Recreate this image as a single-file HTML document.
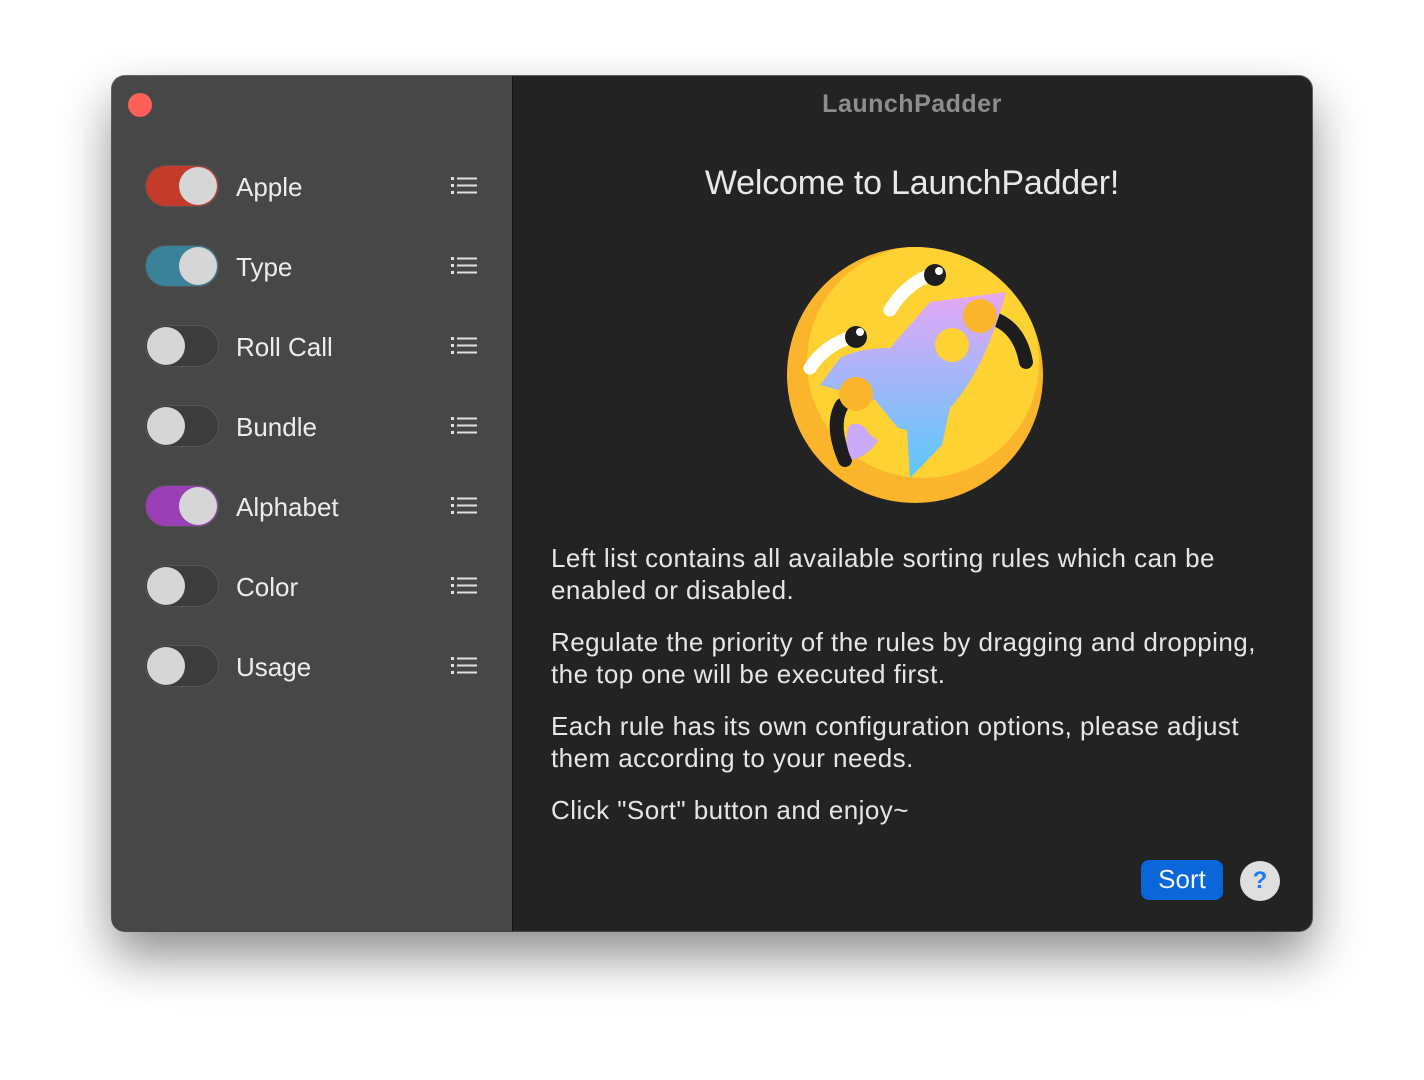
<!DOCTYPE html>
<html><head><meta charset="utf-8"><style>
html,body{margin:0;padding:0;width:1424px;height:1080px;background:#fff;overflow:hidden;font-family:"Liberation Sans",sans-serif;}
.win{position:absolute;left:112px;top:76px;width:1200px;height:855px;border-radius:13px;background:#232323;overflow:hidden;box-shadow:0 25px 50px rgba(0,0,0,.45),0 0 0 1px #6a6a6a;}
.side{position:absolute;left:0;top:0;width:400px;height:855px;background:#474747;border-right:1px solid #111;}
.close{position:absolute;left:16px;top:17px;width:24px;height:24px;border-radius:50%;background:#fe5f57;}
.row{position:absolute;left:33px;height:44px;width:340px;}
.tg{position:absolute;left:0;top:0;width:74px;height:42px;border-radius:21px;background:#3c3c3c;box-shadow:inset 0 0 0 1px #555;}
.kn{position:absolute;top:2px;width:38px;height:38px;border-radius:50%;background:#d6d6d6;}
.row .lb{position:absolute;left:91px;top:7px;font-size:26px;color:#ececec;}
.li{position:absolute;left:306px;top:11px;}
.title{position:absolute;left:400px;width:800px;top:14px;text-align:center;font-weight:bold;font-size:25px;letter-spacing:0.5px;color:#8d8d8d;}
.wel{position:absolute;left:400px;width:800px;top:88px;text-align:center;font-size:34px;color:#e8e8e8;letter-spacing:-0.2px;}
.txt{position:absolute;left:439px;top:466px;font-size:26px;line-height:32px;color:#e6e6e6;white-space:nowrap;letter-spacing:0.45px;}
.txt p{margin:0 0 20px 0;}
.sort{position:absolute;left:1029px;top:784px;width:82px;height:40px;border-radius:8px;background:#0a66d9;color:#f2f6ff;font-size:26px;text-align:center;line-height:39px;}
.help{position:absolute;left:1128px;top:785px;width:40px;height:40px;border-radius:50%;background:#dfdfdf;color:#1a7cf5;font-size:24px;font-weight:bold;text-align:center;line-height:40px;}
</style></head><body>
<div class="win">
<div class="side">
<div class="close"></div>
<div class="row" style="top:89px"><div class="tg" style="background:#c43b2c"><div class="kn" style="left:34px"></div></div><div class="lb">Apple</div><svg class="li" width="28" height="20"><g fill="#e0e0e0"><rect x="0" y="1" width="3" height="3"/><rect x="0" y="8" width="3" height="3"/><rect x="0" y="15" width="3" height="3"/><rect x="6" y="1.5" width="20" height="2"/><rect x="6" y="8.5" width="20" height="2"/><rect x="6" y="15.5" width="20" height="2"/></g></svg></div>
<div class="row" style="top:169px"><div class="tg" style="background:#3a8299"><div class="kn" style="left:34px"></div></div><div class="lb">Type</div><svg class="li" width="28" height="20"><g fill="#e0e0e0"><rect x="0" y="1" width="3" height="3"/><rect x="0" y="8" width="3" height="3"/><rect x="0" y="15" width="3" height="3"/><rect x="6" y="1.5" width="20" height="2"/><rect x="6" y="8.5" width="20" height="2"/><rect x="6" y="15.5" width="20" height="2"/></g></svg></div>
<div class="row" style="top:249px"><div class="tg"><div class="kn" style="left:2px"></div></div><div class="lb">Roll Call</div><svg class="li" width="28" height="20"><g fill="#e0e0e0"><rect x="0" y="1" width="3" height="3"/><rect x="0" y="8" width="3" height="3"/><rect x="0" y="15" width="3" height="3"/><rect x="6" y="1.5" width="20" height="2"/><rect x="6" y="8.5" width="20" height="2"/><rect x="6" y="15.5" width="20" height="2"/></g></svg></div>
<div class="row" style="top:329px"><div class="tg"><div class="kn" style="left:2px"></div></div><div class="lb">Bundle</div><svg class="li" width="28" height="20"><g fill="#e0e0e0"><rect x="0" y="1" width="3" height="3"/><rect x="0" y="8" width="3" height="3"/><rect x="0" y="15" width="3" height="3"/><rect x="6" y="1.5" width="20" height="2"/><rect x="6" y="8.5" width="20" height="2"/><rect x="6" y="15.5" width="20" height="2"/></g></svg></div>
<div class="row" style="top:409px"><div class="tg" style="background:#9a3fb5"><div class="kn" style="left:34px"></div></div><div class="lb">Alphabet</div><svg class="li" width="28" height="20"><g fill="#e0e0e0"><rect x="0" y="1" width="3" height="3"/><rect x="0" y="8" width="3" height="3"/><rect x="0" y="15" width="3" height="3"/><rect x="6" y="1.5" width="20" height="2"/><rect x="6" y="8.5" width="20" height="2"/><rect x="6" y="15.5" width="20" height="2"/></g></svg></div>
<div class="row" style="top:489px"><div class="tg"><div class="kn" style="left:2px"></div></div><div class="lb">Color</div><svg class="li" width="28" height="20"><g fill="#e0e0e0"><rect x="0" y="1" width="3" height="3"/><rect x="0" y="8" width="3" height="3"/><rect x="0" y="15" width="3" height="3"/><rect x="6" y="1.5" width="20" height="2"/><rect x="6" y="8.5" width="20" height="2"/><rect x="6" y="15.5" width="20" height="2"/></g></svg></div>
<div class="row" style="top:569px"><div class="tg"><div class="kn" style="left:2px"></div></div><div class="lb">Usage</div><svg class="li" width="28" height="20"><g fill="#e0e0e0"><rect x="0" y="1" width="3" height="3"/><rect x="0" y="8" width="3" height="3"/><rect x="0" y="15" width="3" height="3"/><rect x="6" y="1.5" width="20" height="2"/><rect x="6" y="8.5" width="20" height="2"/><rect x="6" y="15.5" width="20" height="2"/></g></svg></div>
</div>
<div class="title">LaunchPadder</div>
<div class="wel">Welcome to LaunchPadder!</div>
<svg style="position:absolute;left:668px;top:164px" width="270" height="270" viewBox="0 0 270 270">
<defs><linearGradient id="rg" x1="0" y1="0" x2="0" y2="1"><stop offset="0" stop-color="#e6a6f6"/><stop offset="1" stop-color="#58c8fb"/></linearGradient>
<clipPath id="cc"><circle cx="135" cy="135" r="128"/></clipPath></defs>
<circle cx="135" cy="135" r="128" fill="#fbb52c"/>
<circle cx="143" cy="122" r="116" fill="#fed232" clip-path="url(#cc)"/>
<path d="M110 70 Q125 45 150 35" stroke="#fff" stroke-width="13" fill="none" stroke-linecap="round"/>
<path d="M30 128 Q45 105 72 97" stroke="#fff" stroke-width="13" fill="none" stroke-linecap="round"/>
<circle cx="155" cy="35" r="11" fill="#1d1d1d"/><circle cx="159" cy="31" r="4" fill="#fff"/>
<circle cx="76" cy="97" r="11" fill="#1d1d1d"/><circle cx="80" cy="92" r="4" fill="#fff"/>
<path d="M217 80 Q240 90 246 122" stroke="#1d1d1d" stroke-width="14" fill="none" stroke-linecap="round"/>
<path d="M62 165 Q50 185 65 220" stroke="#1d1d1d" stroke-width="14" fill="none" stroke-linecap="round"/>
<path d="M226 52 L150 62 L110 108 Q80 108 60 118 L40 145 L95 160 L118 188 L127 190 L130 238 L162 205 L170 168 Q205 130 226 52 Z" fill="url(#rg)"/>
<path d="M70 185 Q82 180 90 195 L98 200 Q90 215 72 220 Q62 200 70 185 Z" fill="#caaaf8"/>
<circle cx="200" cy="76" r="17" fill="#fbb52c"/>
<circle cx="172" cy="105" r="17" fill="#fed232"/>
<circle cx="76" cy="154" r="17" fill="#fbb52c"/>
</svg>
<div class="txt">
<p>Left list contains all available sorting rules which can be<br>enabled or disabled.</p>
<p>Regulate the priority of the rules by dragging and dropping,<br>the top one will be executed first.</p>
<p>Each rule has its own configuration options, please adjust<br>them according to your needs.</p>
<p>Click "Sort" button and enjoy~</p>
</div>
<div class="sort">Sort</div>
<div class="help">?</div>
</div>
</body></html>
